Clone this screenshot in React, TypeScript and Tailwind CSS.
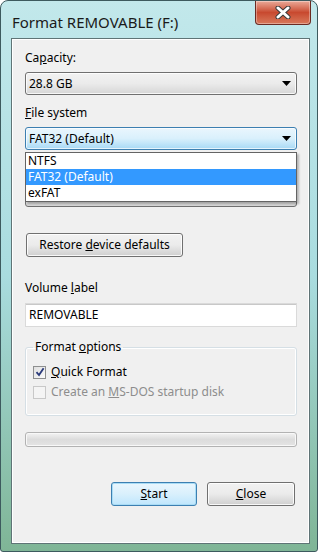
import React from 'react';

const font = { fontFamily: '"Noto Sans", "Open Sans", sans-serif' };

const Arrow: React.FC = () => (
  <svg width="9" height="5" viewBox="0 0 9 5" className="shrink-0">
    <path d="M0 0h9L4.5 5z" fill="#000" />
  </svg>
);

interface ComboProps {
  value: React.ReactNode;
  focused?: boolean;
}

const Combo: React.FC<ComboProps> = ({ value, focused }) => (
  <div
    className={
      focused
        ? 'flex items-center justify-between h-[23px] rounded-[3px] border border-[#3c7fb1] bg-gradient-to-b from-[#eaf6fd] via-[#d9f0fc] to-[#a7d9f5] pl-[3px] pr-[5px] shadow-[inset_0_0_0_1px_rgba(255,255,255,0.7)]'
        : 'flex items-center justify-between h-[23px] rounded-[3px] border border-[#707070] bg-gradient-to-b from-[#f2f2f2] via-[#ebebeb] to-[#d6d6d6] pl-[3px] pr-[5px] shadow-[inset_0_0_0_1px_rgba(255,255,255,0.8)]'
    }
  >
    <span className="text-[12px] leading-[16px] text-black">{value}</span>
    <Arrow />
  </div>
);

interface ButtonProps {
  children: React.ReactNode;
  className?: string;
  primary?: boolean;
}

const Button: React.FC<ButtonProps> = ({ children, className, primary }) => (
  <div
    className={
      (primary
        ? 'border-[#3c7fb1] bg-gradient-to-b from-[#eaf6fd] via-[#d9f0fc] to-[#bee6fd] shadow-[inset_0_0_0_1px_#a9dcf5] '
        : 'border-[#707070] bg-gradient-to-b from-[#f2f2f2] via-[#ebebeb] to-[#cfcfcf] shadow-[inset_0_0_0_1px_rgba(255,255,255,0.85)] ') +
      'flex items-center justify-center h-[24px] rounded-[3px] border text-[12px] leading-[16px] text-black ' +
      (className ?? '')
    }
  >
    {children}
  </div>
);

const CheckBox: React.FC<{ checked?: boolean; disabled?: boolean }> = ({
  checked,
  disabled,
}) => (
  <div
    className={
      'flex items-center justify-center w-[13px] h-[13px] border ' +
      (disabled
        ? 'border-[#c8c8c8] bg-[#f4f4f4]'
        : 'border-[#8e8f8f] bg-gradient-to-br from-[#e0e0e0] to-[#fbfbfb]')
    }
  >
    {checked && (
      <svg width="10" height="10" viewBox="0 0 10 10">
        <path
          d="M1.5 5.2 L4 8 L8.6 1.2"
          fill="none"
          stroke="#2a3a7a"
          strokeWidth="1.8"
        />
      </svg>
    )}
  </div>
);

const App: React.FC = () => {
  return (
    <div className="w-[320px] h-[555px] bg-white" style={font}>
      <div className="w-[318px] h-[552px] rounded-t-[8px] rounded-b-[3px] border border-[#3d5a5e] bg-gradient-to-b from-[#c2e8eb] via-[#a9dcdf] to-[#7fb596] pl-[10px] pr-[7px] pb-[7px]">
        <div className="flex justify-between h-[37px]">
          <span className="pt-[11px] pl-[1px] text-[15px] leading-[20px] text-[#1a1a1a]">
            Format REMOVABLE (F:)
          </span>
          <div className="flex items-center justify-center w-[56px] h-[24px] -mr-[1px] rounded-b-[4px] border border-t-0 border-[#6b2a22] bg-gradient-to-b from-[#e9a998] via-[#c8492f] to-[#d8785a] shadow-[inset_0_0_0_1px_rgba(255,255,255,0.35)]">
            <svg width="16" height="13" viewBox="0 0 16 13">
              <path
                d="M3 2 L13 11 M13 2 L3 11"
                stroke="#3a3a3a"
                strokeWidth="5"
                strokeLinecap="round"
              />
              <path
                d="M3 2 L13 11 M13 2 L3 11"
                stroke="#fff"
                strokeWidth="3"
                strokeLinecap="round"
              />
            </svg>
          </div>
        </div>

        <div className="relative h-[506px] border border-[#5f7476] bg-[#f0f0f0] pl-[13px] pr-[12px] pt-[11px] shadow-[inset_0_0_0_1px_#ffffff] text-black">
          <div className="text-[12px] leading-[16px]">
            Ca<u>p</u>acity:
          </div>
          <div className="mt-[6px]">
            <Combo value="28.8 GB" />
          </div>

          <div className="mt-[10px] text-[12px] leading-[16px]">
            <u>F</u>ile system
          </div>
          <div className="relative mt-[6px]">
            <Combo value="FAT32 (Default)" focused />
            <div className="absolute left-0 right-0 top-[25px] z-10 border border-[#646464] bg-white text-[12px] leading-[16px] shadow-[2px_2px_2px_rgba(0,0,0,0.25)]">
              <div className="pl-[2px] h-[16px]">NTFS</div>
              <div className="pl-[2px] h-[16px] bg-[#3399ff] text-white">
                FAT32 (Default)
              </div>
              <div className="pl-[2px] h-[16px]">exFAT</div>
            </div>
          </div>

          {/* allocation unit size row, covered by the open list */}
          <div className="mt-[12px] h-[16px]" />
          <div className="mt-[6px] h-[23px] rounded-[3px] border border-[#707070] bg-gradient-to-b from-[#f2f2f2] to-[#d6d6d6]" />

          <Button className="mt-[26px] w-[157px] ml-[1px]">
            Restore&nbsp;<u>d</u>evice defaults
          </Button>

          <div className="mt-[23px] text-[12px] leading-[16px]">
            Volume <u>l</u>abel
          </div>
          <div className="mt-[7px] flex items-center h-[24px] border border-[#dadada] bg-white pl-[3px] text-[12px] leading-[16px] shadow-[inset_0_1px_0_#c8c8c8]">
            REMOVABLE
          </div>

          <fieldset className="mt-[12px] h-[77px] rounded-[3px] border border-[#d5dfe5] px-[7px] shadow-[inset_0_0_0_1px_#ffffff]">
            <legend className="px-[2px] text-[12px] leading-[16px]">
              Format <u>o</u>ptions
            </legend>
            <div className="mt-[7px] flex items-center gap-[5px] h-[20px] text-[12px] leading-[16px]">
              <CheckBox checked />
              <span>
                <u>Q</u>uick Format
              </span>
            </div>
            <div className="flex items-center gap-[5px] h-[20px] text-[12px] leading-[16px] text-[#8d8d8d]">
              <CheckBox disabled />
              <span>
                Create an <u>M</u>S-DOS startup disk
              </span>
            </div>
          </fieldset>

          <div className="mt-[16px] h-[15px] rounded-[3px] border border-[#b2b2b2] bg-gradient-to-b from-[#f3f3f3] via-[#dcdcdc] to-[#e4e4e4] shadow-[inset_0_0_0_1px_#f8f8f8]" />

          <div className="mt-[35px] flex justify-end gap-[10px] mr-[2px]">
            <Button primary className="w-[86px]">
              <u>S</u>tart
            </Button>
            <Button className="w-[88px]">
              <u>C</u>lose
            </Button>
          </div>
        </div>
      </div>
    </div>
  );
};

export default App;
